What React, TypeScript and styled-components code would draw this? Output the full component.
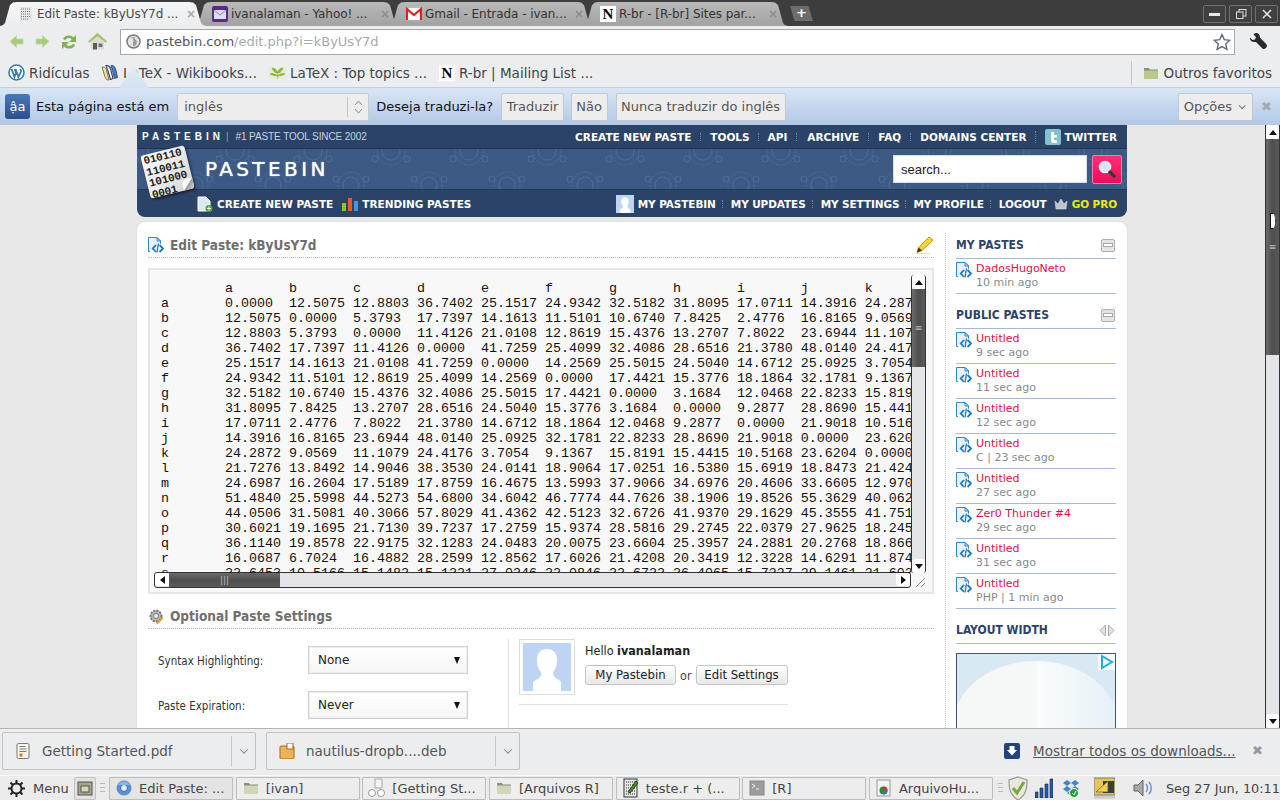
import React from "react";
import styled, { createGlobalStyle } from "styled-components";

const Global = createGlobalStyle`
  html, body { margin: 0; padding: 0; height: 100%; overflow: hidden; }
  body { font-family: "DejaVu Sans", sans-serif; background: #ebedef; }
  #root { height: 100%; }
  * { box-sizing: border-box; }
`;

const Frame = styled.div`
  width: 1280px; height: 800px; display: flex; flex-direction: column; overflow: hidden; position: relative;
`;

/* ---------- tab strip ---------- */
const TabStrip = styled.div`
  height: 26px; flex: none; background: #3d3d3d; display: flex; align-items: flex-end;
`;
const Tab = styled.div<{ $active?: boolean }>`
  width: 206px; height: 24px; flex: none; display: flex; align-items: center; gap: 3px; padding: 0 10px 0 18px;
  margin-right: -12px; position: relative; z-index: ${p => (p.$active ? 2 : 1)};
  font-size: 12px; white-space: nowrap; overflow: hidden;
  color: ${p => (p.$active ? "#4a4a4a" : "#333")};
  background: ${p => (p.$active ? "linear-gradient(#f4f5f6,#ebedef)" : "linear-gradient(#b9b9b9,#a2a2a2)")};
  clip-path: polygon(0 100%, 3px 96%, 5px 88%, 10px 12%, 13px 2%, 17px 0, calc(100% - 17px) 0, calc(100% - 13px) 2%, calc(100% - 10px) 12%, calc(100% - 5px) 88%, calc(100% - 3px) 96%, 100% 100%);
`;
const TabTitle = styled.span`flex: 1; min-width: 0; letter-spacing: -.05px;`;
const TabClose = styled.span<{ $active?: boolean }>`
  color: ${p => (p.$active ? "#a8a8a8" : "#8c8c8c")}; font-size: 12px; font-weight: bold; flex: none;
`;
const NewTab = styled.div`
  width: 23px; height: 15px; margin: 0 0 5px 14px; background: #6c6c6c; color: #fff; font: bold 13px/14px "DejaVu Sans", sans-serif; text-align: center;
  clip-path: polygon(0 0, 80% 0, 100% 100%, 20% 100%); flex: none;
`;
const WinControls = styled.div`margin-left: auto; display: flex; gap: 3px; align-self: flex-start; padding: 5px 2px 0 0;`;
const WinBtn = styled.div`
  width: 23px; height: 18px; border: 1px solid #707070; border-radius: 2px; background: #404040; display: flex; align-items: center; justify-content: center;
`;

/* ---------- toolbar ---------- */
const Toolbar = styled.div`
  height: 32px; flex: none; background: #ebedef; display: flex; align-items: center; padding: 0 0 1px 9px;
`;
const NavIcons = styled.div`display: flex; gap: 11px; align-items: center; width: 111px; flex: none;`;
const AddressBar = styled.div`
  width: 1115px; height: 26px; flex: none; background: #fff; border: 1px solid #a8a8a8; display: flex; align-items: center; gap: 5px; padding: 0 3px 0 5px; font-size: 13px; color: #a9a9a9;
`;
const Host = styled.span`color: #555;`;
const UrlText = styled.span`flex: 1;`;
const WrenchSlot = styled.div`margin-left: 14px; flex: none;`;

/* ---------- bookmarks ---------- */
const Bookmarks = styled.div`
  height: 29px; flex: none; background: #ebedef; display: flex; align-items: center; padding: 0 8px 0 8px; font-size: 13.5px; color: #444; position: relative;
`;
const Bookmark = styled.div<{ $w: number }>`
  display: flex; align-items: center; gap: 4px; width: ${p => p.$w}px; flex: none; white-space: nowrap;
`;
const OtherBookmarks = styled.div`
  margin-left: auto; height: 24px; border-left: 1px solid #c8c8c8; display: flex; align-items: center; gap: 5px; padding-left: 11px;
`;
const Pointer = styled.div`
  position: absolute; left: 119px; top: 8px; width: 30px; height: 22px; background: linear-gradient(#e4ebf4, #d4e2f4); clip-path: polygon(47% 0, 100% 100%, 0 100%); z-index: 2;
`;

/* ---------- infobar ---------- */
const InfoBar = styled.div`
  height: 38px; flex: none; background: linear-gradient(#d9e6f6, #b3c8e6); border-top: 1px solid #c4d0de; display: flex; align-items: center; padding: 0 8px 0 5px; font-size: 13px; color: #111;
`;
const TranslateIcon = styled.div`
  width: 25px; height: 25px; background: linear-gradient(#4a78b8, #2c4f8a); border-radius: 3px; color: #fff; font-size: 13px; display: flex; align-items: center; justify-content: center; margin-right: 6px;
`;
const LangSelect = styled.div`
  width: 192px; height: 28px; margin: 0 7px 0 8px; background: #ededed; border: 1px solid #c8ccd2; border-radius: 2px; display: flex; align-items: center; padding-left: 6px; color: #555; justify-content: space-between;
`;
const LangArrows = styled.div`
  width: 21px; height: 20px; border-left: 1px solid #c4c4c4; display: flex; align-items: center; justify-content: center;
`;
const InfoBtn = styled.div<{ $ml?: number }>`
  height: 28px; margin-left: ${p => p.$ml ?? 8}px; background: #ededed; border: 1px solid #c4c8ce; border-radius: 2px; display: flex; align-items: center; padding: 0 4.5px; color: #555; white-space: nowrap;
`;
const OptionsBtn = styled(InfoBtn)`gap: 7px; padding: 0 8px 0 5px;`;
const InfoRight = styled.div`margin-left: auto; display: flex; align-items: center; gap: 8px; color: #a0a8b4;`;
const InfoCaret = styled.span`
  width: 5px; height: 5px; border-right: 1px solid #777; border-bottom: 1px solid #777; transform: rotate(45deg) translateY(-1px);
`;

/* ---------- page ---------- */
const Viewport = styled.div`
  flex: none; height: 604px; display: flex; background: #e8e8e8; border-bottom: 1px solid #b4b4b4; overflow: hidden;
`;
const Page = styled.div`flex: 1; min-width: 0; padding-left: 137px; overflow: hidden;`;
const Header = styled.header`
  width: 990px; height: 92px; background: #2c4368; border-radius: 0 0 8px 8px; display: flex; flex-direction: column; position: relative;
`;
const TopRow = styled.div`
  height: 24px; border-bottom: 1px solid #1f3250; display: flex; align-items: center; padding: 0 10px 0 5px; color: #fff; flex: none;
`;
const Brand = styled.span`
  font: bold 10px "Liberation Sans", sans-serif; letter-spacing: 4.02px; width: 84px; white-space: nowrap;
`;
const Tagline = styled.span`
  font: 10px "Liberation Sans", sans-serif; color: #c6d3e6; white-space: nowrap; letter-spacing: -.1px;
  &::before { content: "|"; color: #7f9cc4; margin-right: 7px; }
`;
const NavList = styled.nav<{ $left?: boolean; $tight?: boolean }>`
  ${p => (p.$left ? "" : "margin-left: auto;")} display: flex; align-items: center; font: bold 10.5px "DejaVu Sans", sans-serif; color: #fff; white-space: nowrap;
  ${p => (p.$tight ? "letter-spacing: -.1px;" : "")}
`;
const NavLink = styled.span<{ $sep?: boolean; $yellow?: boolean; $pad?: number }>`
  color: ${p => (p.$yellow ? "#ebeb14" : "#fff")}; display: inline-flex; align-items: center; gap: 4px;
  padding-left: ${p => p.$pad ?? 0}px; position: relative;
  ${p => p.$sep ? `&::before { content: ""; position: absolute; left: ${(p.$pad ?? 18) / 2 - 1}px; top: 2px; bottom: 2px; border-left: 1px dotted #6d86a8; }` : ""}
`;
const Band = styled.div`
  height: 41px; background: #3c5a84; position: relative; display: flex; align-items: center; padding-left: 68px; flex: none; border-bottom: 1px solid #22375a; overflow: hidden;
`;
const BandPattern = styled.svg`position: absolute; left: 0; top: 0;`;
const BigBrand = styled.div`
  position: relative; color: #fff; font: 20px "DejaVu Sans", sans-serif; letter-spacing: 3.4px; margin-top: -1px; text-shadow: 0 0 1px #fff;
`;
const SearchBox = styled.div`
  position: relative; margin-left: auto; width: 194px; height: 28px; background: #fff; font: 13px "Liberation Sans", sans-serif; color: #222; display: flex; align-items: center; padding-left: 7px; margin-right: 5px; border: 1px solid #d6dde8;
`;
const SearchBtn = styled.div`
  position: relative; width: 30px; height: 29px; margin-right: 5px; border-radius: 2px; background: linear-gradient(#ff2d78, #e8105a); border: 1px solid #ff7aa8; display: flex; align-items: center; justify-content: center;
`;
const BottomRow = styled.div`
  flex: 1; display: flex; align-items: center; padding: 0 10px 0 60px; color: #fff;
`;
const Logo = styled.div`
  position: absolute; left: 8px; top: 25px; width: 45px; height: 44px; background: linear-gradient(135deg, #fff, #d4d4d4); border-radius: 3px; transform: rotate(-14deg); box-shadow: 1px 2px 3px rgba(0,0,0,.55);
  font: bold 11px/11.5px "Liberation Mono", monospace; color: #1f1f1f; padding: 1px 0 0 2px; white-space: pre; letter-spacing: -.1px;
`;
const LogoCurl = styled.div`
  position: absolute; right: 0; bottom: 0; width: 11px; height: 11px; background: linear-gradient(135deg, #fff 48%, #9a9a9a 55%, #ddd); border-radius: 5px 0 3px 0;
`;

const Card = styled.main`
  width: 990px; height: 600px; margin-top: 5px; background: #fff; border-radius: 8px 8px 0 0; padding: 11px 10px 0 11px; display: flex; box-shadow: 0 0 2px #d0d0d0;
`;
const MainCol = styled.section`width: 786px; flex: none;`;
const Heading = styled.h2<{ $top?: number }>`
  margin: ${p => p.$top ?? 0}px 0 0; height: 25px; display: flex; align-items: center; gap: 6px; border-bottom: 1px dotted #b5b5b5; padding-bottom: 1px; font: bold 13.5px "DejaVu Sans Condensed", "DejaVu Sans", sans-serif; color: #6f6f6f;
`;
const HeadingGrow = styled.span`flex: 1;`;
const CodeBox = styled.div`
  margin-top: 10px; height: 326px; background: #f8f8f8; border: 2px solid #e6e6e6; padding: 5px 6px 6px 4px; display: grid; grid-template-columns: 757px 15px; grid-template-rows: 298px 15px;
`;
const Code = styled.pre`
  margin: 0; padding: 6px 0 0 7px; overflow: hidden; font: 13.33px/15px "Liberation Mono", monospace; color: #111; tab-size: 8;
  position: relative;
`;
const VScroll = styled.div`
  background: #e3e5e8; border-left: 1px solid #333; display: flex; flex-direction: column; border-right: 1px solid #333; border-radius: 3px;
`;
const HScroll = styled.div`
  background: #e3e5e8; border: 1px solid #333; border-radius: 3px; display: flex; margin-top: -1px;
`;
const Arrow = styled.div<{ $d: "up" | "down" | "left" | "right"; $w: number; $h: number }>`
  width: ${p => p.$w}px; height: ${p => p.$h}px; flex: none; background: #fff; display: flex; align-items: center; justify-content: center; border-radius: 3px;
  &::after { content: ""; width: 0; height: 0;
    ${p => p.$d === "up" ? "border: 4px solid transparent; border-top: 0; border-bottom: 5px solid #111;" : ""}
    ${p => p.$d === "down" ? "border: 4px solid transparent; border-bottom: 0; border-top: 5px solid #111;" : ""}
    ${p => p.$d === "left" ? "border: 4px solid transparent; border-left: 0; border-right: 5px solid #111;" : ""}
    ${p => p.$d === "right" ? "border: 4px solid transparent; border-right: 0; border-left: 5px solid #111;" : ""}
  }
`;
const VThumb = styled.div<{ $h: number }>`
  height: ${p => p.$h}px; flex: none; background: linear-gradient(90deg, #6c6c6c, #4e4e4e 50%, #5a5a5a); display: flex; align-items: center; justify-content: center; color: #bbb; font-size: 9px;
`;
const HThumb = styled.div<{ $w: number }>`
  width: ${p => p.$w}px; flex: none; background: linear-gradient(#6c6c6c, #4e4e4e 50%, #5a5a5a); display: flex; align-items: center; justify-content: center; color: #bbb; font-size: 9px;
`;
const Grow = styled.div`flex: 1;`;
const Resizer = styled.svg`align-self: end; justify-self: end;`;

const SettingsGrid = styled.div`
  display: flex; height: 120px;
`;
const SettingsForm = styled.div`
  width: 360px; flex: none; padding: 17px 0 0 10px; display: flex; flex-direction: column; gap: 17px;
`;
const FieldRow = styled.div`display: flex; align-items: center; font: 11.5px "DejaVu Sans Condensed", "DejaVu Sans", sans-serif; color: #333;`;
const FieldLabel = styled.span`width: 150px; padding-top: 1px;`;
const FakeSelect = styled.div`
  width: 160px; height: 28px; border: 1px solid #d0d0d0; box-shadow: inset 0 0 0 1px #eee; background: linear-gradient(#fff,#f6f6f6); display: flex; align-items: center; justify-content: space-between; padding: 0 7px 0 9px; font: 12px "DejaVu Sans", sans-serif; color: #222;
  &::after { content: ""; border: 3px solid transparent; border-bottom: 0; border-top: 7px solid #111; }
`;
const UserPanel = styled.div`
  flex: none; width: 280px; border-left: 1px solid #e0e0e0; margin-top: 10px; padding-left: 10px;
`;
const UserTop = styled.div`display: flex; gap: 10px; height: 66px; border-bottom: 1px solid #e2e2e2;`;
const Avatar = styled.div`
  width: 56px; height: 56px; border: 1px solid #ddd; padding: 3px; flex: none;
`;
const UserBody = styled.div`font: 12.5px "DejaVu Sans Condensed", "DejaVu Sans", sans-serif;`;
const Hello = styled.div`color: #222; margin-top: 4px;`;
const UserActions = styled.div`display: flex; align-items: center; gap: 4px; margin-top: 7px; color: #444;`;
const UserBtn = styled.div<{ $w: number }>`
  width: ${p => p.$w}px; height: 20px; border: 1px solid #c4c4c4; border-radius: 3px; background: linear-gradient(#fff, #e8e8e8); display: flex; align-items: center; justify-content: center; font-size: 13px; color: #222; padding-bottom: 1px;
`;

const Sidebar = styled.aside`
  flex: none; width: 181px; border-left: 1px dotted #c4c4c4; padding: 1px 10px 0 10px; margin-left: 11px;
`;
const SideHead = styled.div<{ $top?: number }>`
  margin-top: ${p => p.$top ?? 0}px; height: 25px; border-bottom: 1px solid #a6b9d6; display: flex; align-items: center; justify-content: space-between; font: bold 12px "DejaVu Sans Condensed", "DejaVu Sans", sans-serif; color: #2c4368; padding: 0 1px 2px 0;
`;
const Collapse = styled.div`
  width: 14px; height: 13px; border: 1px solid #b0b0b0; background: #e4e4e4; border-radius: 2px; display: flex; align-items: center; justify-content: center;
  &::after { content: ""; width: 8px; height: 2px; background: #fff; outline: 1px solid #aaa; }
`;
const PasteRow = styled.div`
  height: 35px; border-bottom: 1px solid #a6b9d6; display: flex; gap: 4px; padding-top: 3px;
`;
const PasteInfo = styled.div`font-size: 11px; line-height: 14px;`;
const PasteTitle = styled.div`color: #e0103f;`;
const PasteMeta = styled.div`color: #8a8a8a;`;
const WidthArrows = styled.div`display: flex; gap: 2px;`;
const AdBox = styled.div`
  margin-top: 9px; width: 160px; height: 120px; border: 1px solid #3d566e; background: #d9e9f3; position: relative; overflow: hidden;
  &::before { content: ""; position: absolute; left: -4px; top: 7px; width: 166px; height: 130px; border-radius: 50%; background: linear-gradient(90deg, #f6f8f8 50%, #fafcfd 51%, #e4f0f6); }
`;
const AdChoice = styled.svg`position: absolute; right: 0; top: 0;`;

const PageScroll = styled.div`
  width: 15px; flex: none; background: #e3e5e8; border-left: 1px solid #333; border-right: 1px solid #333; display: flex; flex-direction: column; position: relative;
`;
const Marker = styled.div`
  position: absolute; left: 4px; top: 88px; width: 6px; height: 16px; background: #fff; border: 1px solid #111; clip-path: polygon(0 0, 60% 0, 100% 50%, 60% 100%, 0 100%);
`;

/* ---------- downloads ---------- */
const Shelf = styled.div`
  height: 46px; flex: none; background: #ebedef; display: flex; align-items: center; padding: 0 17px 3px 2px; font-size: 13.5px; color: #555;
`;
const DlItem = styled.div<{ $ml?: number }>`
  width: 254px; height: 38px; margin-left: ${p => p.$ml ?? 0}px; border: 1px solid #c2c2c2; border-radius: 2px; display: flex; align-items: center; padding-left: 12px; flex: none;
`;
const DlName = styled.span`flex: 1; margin-left: 11px; white-space: nowrap;`;
const DlCaret = styled.div`
  width: 24px; height: 30px; border-left: 1px solid #c6c6c6; display: flex; align-items: center; justify-content: center;
  &::after { content: ""; width: 5px; height: 5px; border-right: 1px solid #888; border-bottom: 1px solid #888; transform: rotate(45deg) translate(-1px,-1px); }
`;
const ShowAll = styled.div`margin-left: auto; display: flex; align-items: center; gap: 13px;`;
const ShowLink = styled.span`text-decoration: underline; color: #555; width: 201px; white-space: nowrap;`;
const ShelfClose = styled.span`color: #999; font-weight: bold; font-size: 13px; margin-left: 5px;`;

/* ---------- taskbar ---------- */
const Taskbar = styled.div`
  height: 25px; flex: none; background: #ebebeb; border-top: 1px solid #fafafa; display: flex; align-items: center; padding: 0 4px 0 8px; font-size: 13px; color: #444; white-space: nowrap;
`;
const MenuLabel = styled.span`margin-left: 8px; width: 41px; flex: none;`;
const Launcher = styled.div`
  width: 22px; height: 23px; border: 1px solid #c2c2c2; border-radius: 2px; display: flex; align-items: center; justify-content: center; background: #e2e2e2; flex: none;
`;
const Grip = styled.div<{ $mx: number }>`
  width: 5px; height: 11px; margin: 0 ${p => p.$mx}px; flex: none;
  background: repeating-linear-gradient(#b8b8b8 0 1px, transparent 1px 4px);
`;
const TaskList = styled.div`display: flex; gap: 2.67px; flex: none;`;
const TaskItem = styled.div<{ $active?: boolean }>`
  width: 124px; height: 23px; flex: none; border: 1px solid #bdbdbd; border-radius: 1px; display: flex; align-items: center; gap: 7px; padding-left: 6px; background: ${p => (p.$active ? "#e4e4e4" : "#ededed")}; overflow: hidden;
`;
const TaskIcon = styled.span`width: 16px; height: 20px; flex: none; display: flex; align-items: center; justify-content: center;`;
const Tray = styled.div`margin-left: auto; display: flex; align-items: center;`;
const TrayIcon = styled.span<{ $ml: number }>`margin-left: ${p => p.$ml}px; display: block; flex: none;`;
const Clock = styled.span`margin-left: 14px; font-size: 12.85px;`;

/* ---------- icons ---------- */
const IconSvg = styled.svg`flex: none; display: block;`;
const Ico = ({ s = 16, w, h, children }: { s?: number; w?: number; h?: number; children: React.ReactNode }) => (
  <IconSvg width={w ?? s} height={h ?? s} viewBox={`0 0 ${w ?? s} ${h ?? s}`}>{children}</IconSvg>
);
const PasteIcon = () => (
  <Ico s={16}>
    <path d="M.5.5h8.500l3.500 3.500v10.500H.5z" fill="#e6f1fb" stroke="#2b87c9" />
    <path d="M9 .5v3.500h3.500z" fill="#cfe4f5" stroke="#2b87c9" />
    <path d="M2 13h8V7l2-1 3.500 5-3 4.500H2z" fill="#fff" />
    <path d="M8 8l-3.200 3.500L8 15M11.500 8l3.500 3.500-3.500 3.500" fill="none" stroke="#1a78bc" strokeWidth="1.800" />
    <path d="M10.500 6.500L9 15.500" stroke="#1a78bc" strokeWidth="1.300" />
  </Ico>
);
const ArrowIcon = ({ right }: { right?: boolean }) => (
  <Ico w={15} h={17}>
    <g transform={right ? "" : "translate(15,0) scale(-1,1)"}>
      <path d="M7.500 2.500l6.500 6-6.500 6V11H1V6h6.500z" fill="#a8cb7c" stroke="#c4d8a8" strokeWidth=".8" />
    </g>
  </Ico>
);
const Reload = () => (
  <Ico s={16}>
    <path d="M13 6.500a5.500 5.500 0 0 0-10-1M3 9.500a5.500 5.500 0 0 0 10 1" fill="none" stroke="#82b254" strokeWidth="2.600" />
    <path d="M15 1v7H8zM1 15V8h7z" fill="#82b254" />
  </Ico>
);
const Home = () => (
  <Ico w={19} h={17}>
    <path d="M9.500 0L19 8.500l-1.500 1L9.500 3.500l-8 6L0 8.500z" fill="#9cc468" stroke="#b4d48c" strokeWidth=".5" />
    <path d="M3 8.500l6.500-5 6.500 5V16.500H3z" fill="#dedbd0" />
    <rect x="5" y="10" width="4" height="6.500" fill="#5e5e54" />
    <rect x="10.500" y="10.500" width="4" height="3.500" fill="#6a7782" />
  </Ico>
);
const Globe = () => (
  <Ico s={15}>
    <circle cx="7.500" cy="7.500" r="6.500" fill="#e4e4e4" stroke="#7c7c7c" strokeWidth="1.500" />
    <path d="M4 3.500c2 0 3.500 1 3.500 3s-1.500 3 0 6c2-1 3.500-2.500 3.500-4.500S8.500 6 8.500 3" fill="#9a9a9a" />
  </Ico>
);
const Star = () => (
  <Ico s={18}>
    <path d="M9 1.500l2.300 5.100 5.500.6-4.100 3.700 1.200 5.500L9 13.600l-4.900 2.800 1.200-5.500L1.200 7.200l5.500-.6z" fill="#fff" stroke="#5c6a7c" strokeWidth="1.400" />
  </Ico>
);
const Wrench = () => (
  <Ico s={19}>
    <path d="M1 5.500L3.500 8l2.500-.5L7 5 4.500 2.500C7-.5 11 1 11 5.500L18 13c.5 2-2 4.500-4 4L7 10C2.500 10.500.5 8 1 5.500z" fill="#2a2a2a" />
  </Ico>
);
const WP = () => (
  <Ico s={17}>
    <circle cx="8.500" cy="8.500" r="7.500" fill="#fff" stroke="#3a7ba8" strokeWidth="1.600" />
    <path d="M3.500 5l3 8 1.500-4.500L6.500 5M7.500 5l3 8 2.500-5.500c.3-1-.3-1.800-.8-2.500" fill="none" stroke="#3a7ba8" strokeWidth="1.800" />
  </Ico>
);
const Books = () => (
  <Ico s={18}>
    <path d="M1 3c3 0 4 1 5 5l2 8c-3 0-3-1-4-3z" fill="#f0dfa8" stroke="#6a5a2a" strokeWidth=".8" />
    <path d="M5 1.500c3 0 4 1 5 5l2 8-2.500 1L7 7z" fill="#fff" stroke="#27406e" strokeWidth="1.100" />
    <path d="M10 1.500c3 0 4 1 5 5l1.500 7-3 1-2-8z" fill="#4c7ac0" stroke="#1f3a6a" strokeWidth=".8" />
  </Ico>
);
const Leaf = () => (
  <Ico s={17}>
    <rect y="3" width="17" height="12" fill="#e7eed8" />
    <path d="M8.500 15V8M8.500 9C6 9 4 7 3 4c3 0 5 2 5.500 5zM8.500 9c2.500 0 4.500-2 5.500-5-3 0-5 2-5.500 5zM8.500 12C6 12 3 11 1 10c3-1 6 0 7.500 2zM8.500 12c2.500 0 5.500-1 7.500-2-3-1-6 0-7.500 2z" fill="#93b833" stroke="#7aa024" strokeWidth=".5" />
  </Ico>
);
const NIcon = styled.span`
  width: 16px; height: 16px; background: #fff; color: #000; font: bold 15px/16px "Liberation Serif", serif; text-align: center; flex: none; display: block;
`;
const Folder = ({ c = "#b9c98a" }: { c?: string }) => (
  <Ico s={16}>
    <path d="M1 3h5l1 1.500h8V14H1z" fill="#8d8d80" />
    <rect x="1" y="5.500" width="14" height="8.500" fill={c} />
  </Ico>
);
const Yahoo = () => (
  <Ico s={16}>
    <rect width="16" height="16" rx="2" fill="#5a2a84" />
    <rect x="2" y="4" width="12" height="9" fill="#dcdcf0" />
    <path d="M2 4l6 5 6-5" fill="none" stroke="#8a8ab0" />
  </Ico>
);
const Gmail = () => (
  <Ico s={16}>
    <rect y="2" width="16" height="12" fill="#fff" stroke="#ccc" strokeWidth=".5" />
    <path d="M1 14V3l7 6 7-6v11" fill="none" stroke="#d8231f" strokeWidth="2.200" />
  </Ico>
);
const PasteFav = () => (
  <Ico s={16}>
    <rect x="2" y="1" width="12" height="14" fill="#e6e6e6" />
    <path d="M3 3h10M3 5.500h10M3 8h10M3 10.500h10M3 13h8" stroke="#777" strokeDasharray="1 1" />
  </Ico>
);
const Magnifier = () => (
  <Ico s={20}>
    <circle cx="8" cy="8" r="5.500" fill="#d2e6f6" stroke="#e8e8e8" strokeWidth="1.600" />
    <path d="M12 12l6 6" stroke="#333" strokeWidth="3" />
  </Ico>
);
const NewDoc = () => (
  <Ico s={16}>
    <path d="M1 1h8l4 4v10H1z" fill="#dce8f6" stroke="#fff" />
    <circle cx="12" cy="12.500" r="3.500" fill="#5aa02c" />
    <path d="M12 10.500v4M10 12.500h4" stroke="#fff" />
  </Ico>
);
const Chart = () => (
  <Ico s={16}>
    <rect x="0" y="7" width="4" height="8" fill="#8fc31f" />
    <rect x="6" y="2" width="4" height="13" fill="#e85a2c" />
    <rect x="12" y="5" width="4" height="10" fill="#3a9ad9" />
  </Ico>
);
const Twitter = () => (
  <Ico s={16}>
    <rect width="16" height="16" rx="2" fill="#7fc4ce" />
    <path d="M6 3h3v3h3v2.500H9V11h3v3H8c-1.500 0-2-1-2-2.500z" fill="#fff" />
  </Ico>
);
const Crown = () => (
  <Ico s={14}>
    <path d="M1 4l3 3 3-5 3 5 3-3-1 8H2z" fill="#bcc4cf" stroke="#e8e8e8" strokeWidth=".5" />
  </Ico>
);
const Silhouette = ({ s }: { s: number }) => (
  <IconSvg width={s} height={s} viewBox="0 0 48 48">
    <rect width="48" height="48" fill="#bdd4f2" />
    <path d="M24 6c7 0 10 4 10 11 0 6-2 10-4 12 0 4 2 6 6 8l2 2v9H10v-9l3-2c4-2 6-4 5-8-2-2-4-6-4-12 0-7 3-11 10-11z" fill="#fff" />
  </IconSvg>
);
const Pencil = () => (
  <Ico s={18}>
    <path d="M13 1l4 3L6 14.500l-5 2 1.500-5z" fill="#f3d43a" stroke="#c89a10" />
    <path d="M1 16.500l5-2-3.500-3z" fill="#333" />
    <path d="M0 17.500h14" stroke="#f2e590" />
  </Ico>
);
const SettingsGear = () => (
  <Ico s={16}>
    <circle cx="8" cy="8" r="5.500" fill="#b8b8b8" stroke="#777" strokeWidth="1.800" strokeDasharray="2.200 1" />
    <circle cx="8" cy="8" r="2.500" fill="#eee" stroke="#777" />
    <path d="M8 15l6-6 1.500 1.500-6 6z" fill="#e8a030" />
  </Ico>
);
const PdfIcon = () => (
  <Ico s={16}>
    <rect x="2" y=".5" width="12" height="15" rx="1.500" fill="#f6f6f0" stroke="#777" />
    <path d="M4.500 3.500h6M4.500 6h7M4.500 8.500h7" stroke="#777" />
    <rect x="4.500" y="10.500" width="3" height="3" fill="#c87a1a" />
  </Ico>
);
const DebIcon = () => (
  <Ico s={16}>
    <rect x="1" y="3" width="14" height="13" rx="1" fill="#eab35a" stroke="#a86c18" />
    <rect x="8" y="0" width="6" height="6" fill="#fff" stroke="#a86c18" />
  </Ico>
);
const DownloadIcon = () => (
  <Ico s={16}>
    <rect width="16" height="16" rx="2" fill="#24427c" />
    <path d="M5.500 3h5v4h2.500L8 12.500 3 7h2.500z" fill="#fff" />
  </Ico>
);
const GearBlack = () => (
  <Ico s={17}>
    <circle cx="8.500" cy="8.500" r="5" fill="none" stroke="#222" strokeWidth="2" />
    <path d="M8.500 0v4M8.500 13v4M0 8.500h4M13 8.500h4M2.500 2.500l2.800 2.800M11.700 11.700l2.800 2.800M14.500 2.500l-2.800 2.800M5.300 11.700l-2.800 2.800" stroke="#222" strokeWidth="2" />
  </Ico>
);
const Drawer = () => (
  <Ico s={16}>
    <rect x="1" y="2" width="14" height="13" fill="#a5a58c" stroke="#555" />
    <rect x="4" y="6" width="8" height="6" fill="#d8d8c0" stroke="#555" />
  </Ico>
);
const Chromium = () => (
  <Ico s={16}>
    <circle cx="8" cy="8" r="7.500" fill="#5b8fd0" />
    <circle cx="8" cy="8" r="3.500" fill="#e0ecf8" stroke="#3a6aa8" />
    <path d="M2 5a7 7 0 0 1 12 0H8z" fill="#8fb4e0" />
  </Ico>
);
const GlassesDoc = () => (
  <Ico s={20}>
    <path d="M8 1h7v9H8z" fill="#f4f4f4" stroke="#aaa" />
    <circle cx="5" cy="15" r="3.500" fill="#fff" stroke="#999" />
    <circle cx="14" cy="15" r="3.500" fill="#fff" stroke="#999" />
  </Ico>
);
const TermR = () => (
  <Ico s={16}>
    <rect x="1" y="1" width="14" height="14" fill="#9c9c9c" stroke="#888" />
    <path d="M3 4l3 2-3 2M7 9h3" stroke="#eee" fill="none" />
  </Ico>
);
const Gedit = () => (
  <Ico s={20}>
    <rect x="3" y="1" width="13" height="18" fill="#e8e8e8" stroke="#333" />
    <path d="M5 4h9M5 7h9M5 10h9M5 13h9M5 16h9" stroke="#222" strokeDasharray="1 1" />
    <path d="M7 14L15 3l2 2L9 15z" fill="#4c8c2c" stroke="#1c4c0c" />
  </Ico>
);
const FileChart = () => (
  <Ico s={18}>
    <rect x="2" y="1" width="13" height="16" fill="#f4f4f4" stroke="#999" />
    <circle cx="8.500" cy="11.500" r="4" fill="#2f8a3a" />
    <path d="M8.500 11.500V7.500a4 4 0 0 1 4 4z" fill="#d23c20" />
    <path d="M8.500 11.500h4a4 4 0 0 1-4 4z" fill="#3b6fc0" />
  </Ico>
);
const Shield = () => (
  <Ico w={20} h={25}>
    <path d="M10 1l9 3c0 9-1 15-9 20C2 19 1 13 1 4z" fill="#e8e8e0" stroke="#9a9a90" strokeWidth="1.200" />
    <path d="M5 12l4 5 7-11" fill="none" stroke="#7ca83a" strokeWidth="3" />
  </Ico>
);
const Signal = () => (
  <Ico w={18} h={20}>
    <path d="M0 14h3v6H0zM5 10h3v10H5zM10 6h3v14h-3zM15 1h3v19h-3z" fill="#2c5a9a" stroke="#0a2a5a" strokeWidth=".6" />
  </Ico>
);
const Dropbox = () => (
  <Ico w={18} h={21}>
    <path d="M5 2l4 3-4 3-4-3zM13 2l4 3-4 3-4-3zM5 8l4 3-4 3-4-3zM13 8l4 3-4 3-4-3zM9 12l4 3-4 3-4-3z" fill="#3a88d0" />
    <circle cx="12" cy="15" r="4.500" fill="#2a9a3a" stroke="#fff" />
    <path d="M10 15l2 2 2-4" fill="none" stroke="#fff" />
  </Ico>
);
const Monitor = () => (
  <Ico w={21} h={22}>
    <rect x="0" y="1" width="21" height="17" fill="#e6c65a" stroke="#777" />
    <path d="M9 4h11v12H9z" fill="#3c3c3c" />
    <path d="M2 15L14 4v11z" fill="#f0d050" stroke="#444" strokeWidth=".6" />
    <path d="M0 19h21v2H0z" fill="#ddd" stroke="#999" strokeWidth=".5" />
  </Ico>
);
const Speaker = () => (
  <Ico w={19} h={20}>
    <path d="M1 7h4l5-5v16l-5-5H1z" fill="#a8a8a8" stroke="#666" />
    <path d="M13 6c2 2 2 6 0 8M16 4c3 3 3 9 0 12" fill="none" stroke="#5a86c0" strokeWidth="1.300" />
  </Ico>
);
const MiniTri = ({ left }: { left?: boolean }) => (
  <Ico w={7} h={13}>
    <path d={left ? "M6.500 1v11L1 6.500z" : "M.5 1v11L6 6.500z"} fill="#e4e4e4" stroke="#a8a8a8" />
  </Ico>
);
const Chevrons = () => (
  <Ico w={9} h={16}>
    <path d="M1 6l3.500-4L8 6M1 10l3.500 4L8 10" fill="none" stroke="#8a8a8a" />
  </Ico>
);
const WinMin = () => (
  <Ico w={13} h={8}><rect x="1" y="3" width="11" height="3" fill="#e8e8e8" /></Ico>
);
const WinRestore = () => (
  <Ico s={12}>
    <rect x="4" y="1.500" width="7" height="6.500" fill="none" stroke="#ddd" />
    <rect x="1.500" y="4" width="6.500" height="6.500" fill="#404040" stroke="#ddd" />
  </Ico>
);
const WinClose = () => (
  <Ico s={12}><path d="M2 2l8 8M10 2l-8 8" stroke="#e8e8e8" strokeWidth="1.500" /></Ico>
);

/* ---------- data ---------- */
const matrix: [string, string][] = [
  ["a", "0.0000 12.5075 12.8803 36.7402 25.1517 24.9342 32.5182 31.8095 17.0711 14.3916 24.2872"],
  ["b", "12.5075 0.0000 5.3793 17.7397 14.1613 11.5101 10.6740 7.8425 2.4776 16.8165 9.0569"],
  ["c", "12.8803 5.3793 0.0000 11.4126 21.0108 12.8619 15.4376 13.2707 7.8022 23.6944 11.1079"],
  ["d", "36.7402 17.7397 11.4126 0.0000 41.7259 25.4099 32.4086 28.6516 21.3780 48.0140 24.4176"],
  ["e", "25.1517 14.1613 21.0108 41.7259 0.0000 14.2569 25.5015 24.5040 14.6712 25.0925 3.7054"],
  ["f", "24.9342 11.5101 12.8619 25.4099 14.2569 0.0000 17.4421 15.3776 18.1864 32.1781 9.1367"],
  ["g", "32.5182 10.6740 15.4376 32.4086 25.5015 17.4421 0.0000 3.1684 12.0468 22.8233 15.8191"],
  ["h", "31.8095 7.8425 13.2707 28.6516 24.5040 15.3776 3.1684 0.0000 9.2877 28.8690 15.4415"],
  ["i", "17.0711 2.4776 7.8022 21.3780 14.6712 18.1864 12.0468 9.2877 0.0000 21.9018 10.5168"],
  ["j", "14.3916 16.8165 23.6944 48.0140 25.0925 32.1781 22.8233 28.8690 21.9018 0.0000 23.6204"],
  ["k", "24.2872 9.0569 11.1079 24.4176 3.7054 9.1367 15.8191 15.4415 10.5168 23.6204 0.0000"],
  ["l", "21.7276 13.8492 14.9046 38.3530 24.0141 18.9064 17.0251 16.5380 15.6919 18.8473 21.4241"],
  ["m", "24.6987 16.2604 17.5189 17.8759 16.4675 13.5993 37.9066 34.6976 20.4606 33.6605 12.9701"],
  ["n", "51.4840 25.5998 44.5273 54.6800 34.6042 46.7774 44.7626 38.1906 19.8526 55.3629 40.0621"],
  ["o", "44.0506 31.5081 40.3066 57.8029 41.4362 42.5123 32.6726 41.9370 29.1629 45.3555 41.7516"],
  ["p", "30.6021 19.1695 21.7130 39.7237 17.2759 15.9374 28.5816 29.2745 22.0379 27.9625 18.2451"],
  ["q", "36.1140 19.8578 22.9175 32.1283 24.0483 20.0075 23.6604 25.3957 24.2881 20.2768 18.8662"],
  ["r", "16.0687 6.7024 16.4882 28.2599 12.8562 17.6026 21.4208 20.3419 12.3228 14.6291 11.8745"],
  ["s", "22.6453 10.5166 15.1482 15.1221 27.0246 22.0846 22.6722 26.4065 15.7227 29.1461 21.6032"],
];
const codeText =
  "\ta\tb\tc\td\te\tf\tg\th\ti\tj\tk\n" +
  matrix.map(([k, v]) => k + "\t" + v.split(" ").join("\t")).join("\n");

const publicPastes = [
  ["Untitled", "9 sec ago"],
  ["Untitled", "11 sec ago"],
  ["Untitled", "12 sec ago"],
  ["Untitled", "C | 23 sec ago"],
  ["Untitled", "27 sec ago"],
  ["Zer0 Thunder #4", "29 sec ago"],
  ["Untitled", "31 sec ago"],
  ["Untitled", "PHP | 1 min ago"],
];

const PasteItem = ({ title, meta }: { title: string; meta: string }) => (
  <PasteRow>
    <PasteIcon />
    <PasteInfo>
      <PasteTitle>{title}</PasteTitle>
      <PasteMeta>{meta}</PasteMeta>
    </PasteInfo>
  </PasteRow>
);

const Ornaments = () => (
  <BandPattern width="990" height="41">
    <defs>
      <pattern id="orn" width="78" height="41" patternUnits="userSpaceOnUse">
        <g fill="none" stroke="#52709a" strokeWidth=".8">
          <circle cx="20" cy="2" r="14" strokeDasharray="2 1.500" />
          <circle cx="20" cy="2" r="9" />
          <circle cx="4" cy="10" r="3" />
          <circle cx="36" cy="10" r="3" />
          <circle cx="58" cy="36" r="13" strokeDasharray="2 1.500" />
          <circle cx="58" cy="36" r="8" />
          <circle cx="43" cy="30" r="3" />
          <circle cx="73" cy="30" r="3" />
        </g>
      </pattern>
    </defs>
    <rect width="990" height="41" fill="url(#orn)" />
  </BandPattern>
);

export default function App() {
  return (
    <Frame>
      <Global />
      <TabStrip>
        <Tab $active><PasteFav /><TabTitle>Edit Paste: kByUsY7d ...</TabTitle><TabClose $active>×</TabClose></Tab>
        <Tab><Yahoo /><TabTitle>ivanalaman - Yahoo! ...</TabTitle><TabClose>×</TabClose></Tab>
        <Tab><Gmail /><TabTitle>Gmail - Entrada - ivan...</TabTitle><TabClose>×</TabClose></Tab>
        <Tab><NIcon>N</NIcon><TabTitle>R-br - [R-br] Sites par...</TabTitle><TabClose>×</TabClose></Tab>
        <NewTab>+</NewTab>
        <WinControls>
          <WinBtn><WinMin /></WinBtn>
          <WinBtn><WinRestore /></WinBtn>
          <WinBtn><WinClose /></WinBtn>
        </WinControls>
      </TabStrip>

      <Toolbar>
        <NavIcons>
          <ArrowIcon />
          <ArrowIcon right />
          <Reload />
          <Home />
        </NavIcons>
        <AddressBar>
          <Globe />
          <UrlText><Host>pastebin.com</Host>/edit.php?i=kByUsY7d</UrlText>
          <Star />
        </AddressBar>
        <WrenchSlot><Wrench /></WrenchSlot>
      </Toolbar>

      <Bookmarks>
        <Bookmark $w={93}><WP />Ridículas</Bookmark>
        <Bookmark $w={168}><Books />LaTeX - Wikibooks...</Bookmark>
        <Bookmark $w={170}><Leaf />LaTeX : Top topics ...</Bookmark>
        <Bookmark $w={170}><NIcon>N</NIcon>R-br | Mailing List ...</Bookmark>
        <OtherBookmarks><Folder />Outros favoritos</OtherBookmarks>
        <Pointer />
      </Bookmarks>

      <InfoBar>
        <TranslateIcon>ậa</TranslateIcon>
        Esta página está em
        <LangSelect>inglês<LangArrows><Chevrons /></LangArrows></LangSelect>
        Deseja traduzi-la?
        <InfoBtn $ml={8}>Traduzir</InfoBtn>
        <InfoBtn $ml={7}>Não</InfoBtn>
        <InfoBtn $ml={8}>Nunca traduzir do inglês</InfoBtn>
        <InfoRight>
          <OptionsBtn>Opções <InfoCaret /></OptionsBtn>
          <span>✖</span>
        </InfoRight>
      </InfoBar>

      <Viewport>
        <Page>
          <Header>
            <TopRow>
              <Brand>PASTEBIN</Brand>
              <Tagline>#1 PASTE TOOL SINCE 2002</Tagline>
              <NavList>
                <NavLink>CREATE NEW PASTE</NavLink>
                <NavLink $sep $pad={19}>TOOLS</NavLink>
                <NavLink $sep $pad={18}>API</NavLink>
                <NavLink $sep $pad={20}>ARCHIVE</NavLink>
                <NavLink $sep $pad={19}>FAQ</NavLink>
                <NavLink $sep $pad={19}>DOMAINS CENTER</NavLink>
                <NavLink $sep $pad={18}><Twitter />TWITTER</NavLink>
              </NavList>
            </TopRow>
            <Band>
              <Ornaments />
              <BigBrand>PASTEBIN</BigBrand>
              <SearchBox>search...</SearchBox>
              <SearchBtn><Magnifier /></SearchBtn>
            </Band>
            <BottomRow>
              <NavList $left>
                <NavLink><NewDoc />CREATE NEW PASTE</NavLink>
                <NavLink $pad={9}><Chart />TRENDING PASTES</NavLink>
              </NavList>
              <NavList $tight>
                <NavLink><Silhouette s={18} />MY PASTEBIN</NavLink>
                <NavLink $sep $pad={15}>MY UPDATES</NavLink>
                <NavLink $sep $pad={15}>MY SETTINGS</NavLink>
                <NavLink $sep $pad={14}>MY PROFILE</NavLink>
                <NavLink $sep $pad={15}>LOGOUT</NavLink>
                <NavLink $pad={7} $yellow><Crown />GO PRO</NavLink>
              </NavList>
            </BottomRow>
            <Logo>{"010110\n110011\n101000\n0001"}<LogoCurl /></Logo>
          </Header>

          <Card>
            <MainCol>
              <Heading>
                <PasteIcon />
                <HeadingGrow>Edit Paste: kByUsY7d</HeadingGrow>
                <Pencil />
              </Heading>
              <CodeBox>
                <Code>{codeText}</Code>
                <VScroll>
                  <Arrow $d="up" $w={13} $h={14} />
                  <VThumb $h={78}>≡</VThumb>
                  <Grow />
                  <Arrow $d="down" $w={13} $h={14} />
                </VScroll>
                <HScroll>
                  <Arrow $d="left" $w={14} $h={13} />
                  <HThumb $w={111}>|||</HThumb>
                  <Grow />
                  <Arrow $d="right" $w={14} $h={13} />
                </HScroll>
                <Resizer width="12" height="12" viewBox="0 0 12 12">
                  <path d="M2 11L11 2M7 11l4-4" stroke="#888" />
                </Resizer>
              </CodeBox>
              <Heading $top={10}>
                <SettingsGear />
                <HeadingGrow>Optional Paste Settings</HeadingGrow>
              </Heading>
              <SettingsGrid>
                <SettingsForm>
                  <FieldRow><FieldLabel>Syntax Highlighting:</FieldLabel><FakeSelect>None</FakeSelect></FieldRow>
                  <FieldRow><FieldLabel>Paste Expiration:</FieldLabel><FakeSelect>Never</FakeSelect></FieldRow>
                </SettingsForm>
                <UserPanel>
                  <UserTop>
                    <Avatar><Silhouette s={48} /></Avatar>
                    <UserBody>
                      <Hello>Hello <b>ivanalaman</b></Hello>
                      <UserActions>
                        <UserBtn $w={91}>My Pastebin</UserBtn>
                        or
                        <UserBtn $w={92}>Edit Settings</UserBtn>
                      </UserActions>
                    </UserBody>
                  </UserTop>
                </UserPanel>
              </SettingsGrid>
            </MainCol>
            <Sidebar>
              <SideHead>MY PASTES<Collapse /></SideHead>
              <PasteItem title="DadosHugoNeto" meta="10 min ago" />
              <SideHead $top={10}>PUBLIC PASTES<Collapse /></SideHead>
              {publicPastes.map(([t, m], i) => <PasteItem key={i} title={t} meta={m} />)}
              <SideHead $top={10}>LAYOUT WIDTH<WidthArrows><MiniTri left /><MiniTri /></WidthArrows></SideHead>
              <AdBox>
                <AdChoice width="17" height="16" viewBox="0 0 17 16">
                  <rect width="17" height="16" fill="#f4f8fa" />
                  <path d="M4 2l10 6-10 6z" fill="none" stroke="#1eb0d8" strokeWidth="2" />
                </AdChoice>
              </AdBox>
            </Sidebar>
          </Card>
        </Page>
        <PageScroll>
          <Arrow $d="up" $w={13} $h={14} />
          <VThumb $h={216}>≡</VThumb>
          <Grow />
          <Arrow $d="down" $w={13} $h={14} />
          <Marker />
        </PageScroll>
      </Viewport>

      <Shelf>
        <DlItem><PdfIcon /><DlName>Getting Started.pdf</DlName><DlCaret /></DlItem>
        <DlItem $ml={10}><DebIcon /><DlName>nautilus-dropb....deb</DlName><DlCaret /></DlItem>
        <ShowAll>
          <DownloadIcon />
          <ShowLink>Mostrar todos os downloads...</ShowLink>
          <ShelfClose>✖</ShelfClose>
        </ShowAll>
      </Shelf>

      <Taskbar>
        <GearBlack />
        <MenuLabel>Menu</MenuLabel>
        <Launcher><Drawer /></Launcher>
        <Grip $mx={4} />
        <TaskList>
          <TaskItem $active><TaskIcon><Chromium /></TaskIcon>Edit Paste: ...</TaskItem>
          <TaskItem><TaskIcon><Folder c="#d0d6b8" /></TaskIcon>[ivan]</TaskItem>
          <TaskItem><TaskIcon><GlassesDoc /></TaskIcon>[Getting St...</TaskItem>
          <TaskItem><TaskIcon><Folder c="#d0d6b8" /></TaskIcon>[Arquivos R]</TaskItem>
          <TaskItem><TaskIcon><Gedit /></TaskIcon>teste.r + (...</TaskItem>
          <TaskItem><TaskIcon><TermR /></TaskIcon>[R]</TaskItem>
          <TaskItem><TaskIcon><FileChart /></TaskIcon>ArquivoHu...</TaskItem>
        </TaskList>
        <Tray>
          <Grip $mx={5} />
          <TrayIcon $ml={0}><Shield /></TrayIcon>
          <TrayIcon $ml={7}><Signal /></TrayIcon>
          <TrayIcon $ml={9}><Dropbox /></TrayIcon>
          <TrayIcon $ml={14}><Monitor /></TrayIcon>
          <TrayIcon $ml={18}><Speaker /></TrayIcon>
          <Clock>Seg 27 Jun, 10:11</Clock>
        </Tray>
      </Taskbar>
    </Frame>
  );
}
